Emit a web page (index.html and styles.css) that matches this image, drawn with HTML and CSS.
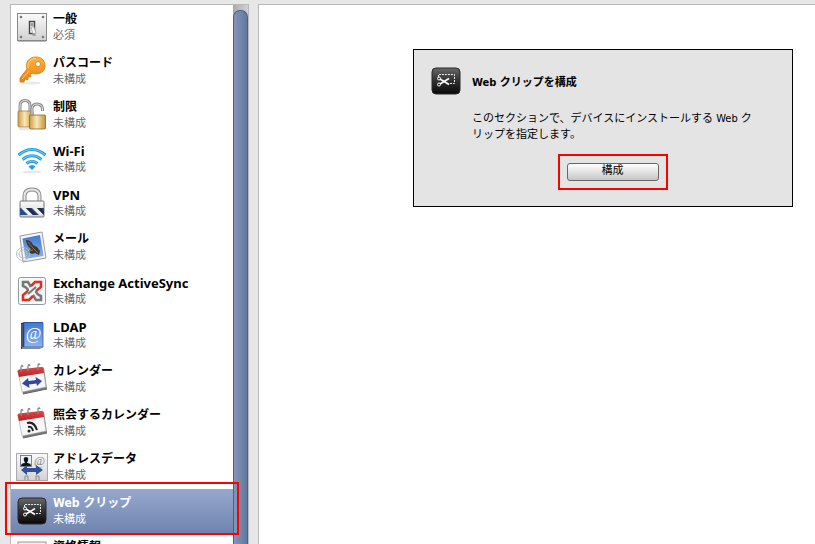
FILE: index.html
```html
<!DOCTYPE html>
<html lang="ja">

<head>
    <meta charset="UTF-8">
    <meta name="viewport" content="width=device-width, initial-scale=1.0">
    <title>Web クリップ</title>
    <link rel="stylesheet" href="styles.css">
</head>

<body>
    <svg class="defs" aria-hidden="true">
        <defs>
            <linearGradient id="plate" x2="0" y2="1">
                <stop offset="0" stop-color="#fafafa" />
                <stop offset="1" stop-color="#d2d2d2" />
            </linearGradient>
            <linearGradient id="orange" x2="0" y2="1">
                <stop offset="0" stop-color="#ffb13d" />
                <stop offset="1" stop-color="#ea8210" />
            </linearGradient>
            <linearGradient id="gold">
                <stop offset="0" stop-color="#c99b4c" />
                <stop offset=".45" stop-color="#fae9b4" />
                <stop offset="1" stop-color="#c49140" />
            </linearGradient>
            <linearGradient id="sky" x2="0" y2="1">
                <stop offset="0" stop-color="#3f79d2" />
                <stop offset="1" stop-color="#8bb4ee" />
            </linearGradient>
            <linearGradient id="red" x2="0" y2="1">
                <stop offset="0" stop-color="#e04848" />
                <stop offset="1" stop-color="#b72222" />
            </linearGradient>
            <linearGradient id="black" x2="0" y2="1">
                <stop offset="0" stop-color="#686868" />
                <stop offset=".5" stop-color="#303030" />
                <stop offset="1" stop-color="#080808" />
            </linearGradient>
            <symbol id="clip" viewBox="0 0 32 32">
                <rect x="2" y="3" width="28" height="26" rx="4" fill="url(#black)" stroke="#282828" />
                <path d="M8.500 12V9.500H24.500V18.500H20" fill="none" stroke="#e8e8e8" stroke-dasharray="2 1" />
                <path d="M10 14 19 19.500M10 19 19 13.500" stroke="#fff" stroke-width="1.500" />
                <circle cx="9" cy="13.500" r="1.500" fill="none" stroke="#fff" />
                <circle cx="9" cy="19.500" r="1.500" fill="none" stroke="#fff" />
            </symbol>
            <symbol id="calendar" viewBox="0 0 32 32">
                <path d="M2 9 28 5 31 26 7 31Z" fill="#777" />
                <path d="M2 8 27 4 30 24 6 29Z" fill="#f6f6f6" stroke="#aaa" stroke-width=".6" />
                <path d="M1.500 8Q1.500 7 3 6.500L25 4Q27 4 27.500 5L28 10 3 14Z" fill="url(#red)" />
                <path d="M5 9V4Q6 1 7 4M12 8V3Q13 0 14 3M22 7V2Q23 0 24 2" fill="none" stroke="#888" stroke-width="1.300" />
                <path d="M7 31 31 26" stroke="#666" />
            </symbol>
        </defs>
    </svg>

    <div class="page">
        <nav class="sidebar">
            <ul class="payloads">
                <li><a href="#" class="payload">
                    <svg class="icon" viewBox="0 0 32 32">
                        <rect x="1.500" y="2.500" width="29" height="27" fill="url(#plate)" stroke="#888" />
                        <path d="M2 30.500H30" stroke="#bbb" />
                        <g fill="#777"><circle cx="5" cy="6" r="1.300" /><circle cx="27" cy="6" r="1.300" /><circle cx="5" cy="26" r="1.300" /><circle cx="27" cy="26" r="1.300" /></g>
                        <path d="M15 22H19L20 25H17Z" fill="#aaa" />
                        <rect x="13.500" y="10.500" width="5" height="12" fill="#f4f4f4" stroke="#444" stroke-width="1.400" />
                        <path d="M14.500 12H17.500V15H14.500Z" fill="#999" /><path d="M15 16H18L20 22 17 23Z" fill="#f4f4f4" stroke="#999" stroke-width=".7" />
                    </svg>
                    <span class="label"><strong>一般</strong><small>必須</small></span>
                </a></li>
                <li><a href="#" class="payload">
                    <svg class="icon" viewBox="0 0 32 32">
                        <ellipse cx="15" cy="28" rx="10" ry="1.500" fill="#e8e8e8" />
                        <path fill-rule="evenodd" d="M11 14C9 7 13 2 20 2 26 2 29 6 29 11S25 19 19 19L16 18 14 20 15 22 12 22 12 25 9 24 8 27 4 27 4 23ZM22 6.500A2.500 2.500 0 1 0 22 11.500 2.500 2.500 0 1 0 22 6.500Z" fill="url(#orange)" stroke="#d47a12" stroke-width=".8" />
                        <path d="M12 13C11 7 15 3.500 20 3.500" fill="none" stroke="#ffd48c" />
                        <path d="M13 16 6 24" stroke="#ffc66d" />
                    </svg>
                    <span class="label"><strong>パスコード</strong><small>未構成</small></span>
                </a></li>
                <li><a href="#" class="payload">
                    <svg class="icon" viewBox="0 0 32 32">
                        <path d="M4 13V7Q4 1.500 9 1.500T14 7V13" fill="none" stroke="#888" stroke-width="3" />
                        <path d="M4 13V7Q4 1.500 9 1.500T14 7V13" fill="none" stroke="#e4e4e4" />
                        <rect x="2" y="12" width="15" height="16" rx="1" fill="url(#gold)" stroke="#9b7434" stroke-width=".7" />
                        <path d="M16 16V10Q16 5 21 5T26.500 10V12" fill="none" stroke="#888" stroke-width="3" />
                        <path d="M16 16V10Q16 5 21 5T26.500 10V12" fill="none" stroke="#e4e4e4" />
                        <rect x="13.500" y="16" width="16" height="14" rx="1" fill="url(#gold)" stroke="#8b652c" stroke-width=".8" />
                        <path d="M3 30H13" stroke="#ccc" />
                    </svg>
                    <span class="label"><strong>制限</strong><small>未構成</small></span>
                </a></li>
                <li><a href="#" class="payload">
                    <svg class="icon" viewBox="0 0 32 32">
                        <ellipse cx="16" cy="29" rx="10" ry="1.500" fill="#e8e8e8" />
                        <g fill="none" stroke="#249ce2" stroke-width="3"><path d="M2.500 12Q16 1 29.500 12M6.500 16.500Q16 9 25.500 16.500M10.500 20.500Q16 16 21.500 20.500" /></g>
                        <g fill="none" stroke="#75cdfa"><path d="M3 11.500Q16 1 29 11.500M7 16Q16 9 25 16M11 20Q16 16 21 20" /></g>
                        <path d="M12.500 23.500Q16 20.500 19.500 23.500L16 27Z" fill="#249ce2" />
                    </svg>
                    <span class="label"><strong class="latin">Wi-Fi</strong><small>未構成</small></span>
                </a></li>
                <li><a href="#" class="payload">
                    <svg class="icon" viewBox="0 0 32 32">
                        <path d="M8.500 15V9Q8.500 2.500 16 2.500T23.500 9V15" fill="none" stroke="#888" stroke-width="4" />
                        <path d="M8.500 15V9Q8.500 2.500 16 2.500T23.500 9V15" fill="none" stroke="#e8e8e8" stroke-width="2" />
                        <rect x="4" y="14" width="24" height="16" rx="1" fill="url(#plate)" stroke="#777" />
                        <path d="M4 21H28V28H4Z" fill="#274a91" />
                        <path d="M5 21H10L17 28H12ZM16 21H21L28 28H23Z" fill="#eee" /><path d="M10 21H14L21 28H17ZM21 21H25L28 24V28Z" fill="#222b42" />
                    </svg>
                    <span class="label"><strong class="latin">VPN</strong><small>未構成</small></span>
                </a></li>
                <li><a href="#" class="payload">
                    <svg class="icon" viewBox="0 0 32 32">
                        <path d="M4 5 26 1 30 27 7 31Z" fill="#f7f7f7" stroke="#999" />
                        <path d="M6.500 7.500 24 4 27.500 25 9.500 28Z" fill="url(#sky)" />
                        <path d="M10 9Q15 9 17 14L21 16 24 20 23 24 19 22 16 23 12 21 15 18Q10 14 10 9Z" fill="#403629" />
                        <path d="M12 11 17 17 22 22M13 20 17 19" stroke="#8f754e" />
                        <g fill="none" stroke="#b4bcc5" stroke-width=".9"><circle cx="7" cy="23" r="6.500" /><circle cx="7" cy="23" r="4" /></g>
                    </svg>
                    <span class="label"><strong>メール</strong><small>未構成</small></span>
                </a></li>
                <li><a href="#" class="payload">
                    <svg class="icon" viewBox="0 0 32 32">
                        <rect x="2.500" y="2.500" width="27" height="27" rx="2" fill="#f1f3f4" stroke="#8d9ca3" />
                        <rect x="4" y="4" width="24" height="24" rx="1" fill="none" stroke="#fff" />
                        <g fill="none" stroke-width="2.500">
                            <path d="M15 12 12 7H7V11Q12 13 12 16" stroke="#777" />
                            <path d="M15 11 19 7H25V12L20 16" stroke="#dc3025" />
                            <path d="M17 20 20 25H25V21Q20 19 20 16" stroke="#777" />
                            <path d="M17 21 13 25H7V20L12 16" stroke="#dc3025" />
                            <path d="M12 19 20 12" stroke="#777" stroke-width="2" />
                        </g>
                    </svg>
                    <span class="label"><strong class="latin">Exchange ActiveSync</strong><small>未構成</small></span>
                </a></li>
                <li><a href="#" class="payload">
                    <svg class="icon" viewBox="0 0 32 32">
                        <path d="M5 4 9 3H27V28L24 30H5Z" fill="#26354c" />
                        <path d="M8 3.500H27V28H8Z" fill="url(#sky)" stroke="#2b5ba7" stroke-width=".8" />
                        <path d="M6 5V28" stroke="#66758b" />
                        <path d="M6 29H26" stroke="#ddd" />
                        <text class="at" x="17.500" y="20" text-anchor="middle" fill="#fff">@</text>
                    </svg>
                    <span class="label"><strong class="latin">LDAP</strong><small>未構成</small></span>
                </a></li>
                <li><a href="#" class="payload">
                    <svg class="icon" viewBox="0 0 32 32">
                        <use href="#calendar" />
                        <path d="M6 20.500 12 15 12.500 18 20 17 19.500 14 26 18 21 23 20.500 20.500 13 21.500 13.500 25Z" fill="#30479b" />
                    </svg>
                    <span class="label"><strong>カレンダー</strong><small>未構成</small></span>
                </a></li>
                <li><a href="#" class="payload">
                    <svg class="icon" viewBox="0 0 32 32">
                        <use href="#calendar" />
                        <g fill="none" stroke="#222" stroke-width="2"><path d="M11 16Q18 14 21 23M12 20Q16 19 17 24" /></g>
                        <circle cx="13" cy="24" r="1.500" fill="#222" />
                    </svg>
                    <span class="label"><strong>照会するカレンダー</strong><small>未構成</small></span>
                </a></li>
                <li><a href="#" class="payload">
                    <svg class="icon" viewBox="0 0 32 32">
                        <rect x=".500" y="2.500" width="31" height="27" fill="url(#plate)" stroke="#aaa" />
                        <rect x="4.500" y="4.500" width="11" height="11" fill="#e9f2fc" stroke="#667" stroke-width=".8" />
                        <path d="M5 15Q5 12 9 12 6 6 10 6T11 12Q15 12 15 15Z" fill="#111" />
                        <text class="at small" x="23.500" y="14" text-anchor="middle" fill="#888">@</text>
                        <path d="M5 19 11 14V17H20V14L27 19 20 24V21H11V24Z" fill="#334f99" />
                        <path d="M9 29V25H12V29M20 29V25H23V29" fill="none" stroke="#888" />
                    </svg>
                    <span class="label"><strong>アドレスデータ</strong><small>未構成</small></span>
                </a></li>
                <li><a href="#" class="payload selected" aria-current="page">
                    <svg class="icon" viewBox="0 0 32 32"><use href="#clip" /></svg>
                    <span class="label"><strong>Web クリップ</strong><small>未構成</small></span>
                </a></li>
                <li><a href="#" class="payload">
                    <svg class="icon" viewBox="0 0 32 32">
                        <rect x="2" y="3" width="28" height="26" fill="#f4f0dc" stroke="#999" />
                        <rect x="5" y="6" width="22" height="20" fill="#fff" stroke="#c8bf92" />
                    </svg>
                    <span class="label"><strong>資格情報</strong></span>
                </a></li>
            </ul>
            <div class="scrollbar"><div class="thumb"></div></div>
        </nav>

        <main class="content">
            <section class="card">
                <svg class="card-icon" viewBox="0 0 32 32"><use href="#clip" /></svg>
                <div class="card-body">
                    <h2>Web クリップを構成</h2>
                    <p>このセクションで、デバイスにインストールする Web クリップを指定します。</p>
                    <div class="action">
                        <button type="button">構成</button>
                    </div>
                </div>
            </section>
        </main>
    </div>
</body>

</html>
```

FILE: styles.css
```css
* {
    box-sizing: border-box;
}

body {
    margin: 0;
    overflow: hidden;
    background-color: #e7e7e7;
    color: #000;
    font-family: "DejaVu Sans Condensed", "Noto Sans CJK JP", sans-serif;
    font-size: 11px;
}

.defs {
    position: absolute;
    width: 0;
    height: 0;
}

.page {
    display: flex;
    gap: 9px;
    height: 100vh;
    padding: 4px 0 0 10px;
}

.sidebar {
    display: flex;
    flex: 0 0 239px;
    border: 1px solid #b9b9b9;
    border-bottom: none;
    background-color: #fff;
}

.payloads {
    flex: 1;
    margin: 0;
    padding: 0;
    list-style: none;
}

.payload {
    display: flex;
    gap: 5px;
    height: 44px;
    padding: 6px 0 0 5px;
    color: #000;
    text-decoration: none;
}

.icon {
    flex: none;
    width: 32px;
    height: 32px;
}

.label {
    display: flex;
    flex-direction: column;
    gap: 1px;
    white-space: nowrap;
}

.label strong {
    font-size: 12px;
    line-height: 16px;
}

.label .latin {
    font-family: "Noto Sans", "Noto Sans CJK JP", sans-serif;
    font-size: 13px;
}

.label small {
    color: #666;
    font-size: 11px;
    line-height: 16px;
}

.at {
    font-family: "Liberation Serif", serif;
    font-size: 17px;
}

.at.small {
    font-size: 12px;
}

.selected {
    position: relative;
    background: linear-gradient(#97a8ce, #7084ae);
    color: #fff;
}

.selected .label small {
    color: #fff;
}

/* red frame around the selected row */
.selected::after {
    content: "";
    position: absolute;
    z-index: 1;
    inset: -7px -6px -2px -6px;
    border: 2px solid #f00;
}

.scrollbar {
    flex: 0 0 15px;
    padding-top: 5px;
    background: linear-gradient(90deg, #aaa, #d2d2d2);
}

.thumb {
    height: 100%;
    border: 1px solid #4c6084;
    border-bottom: none;
    border-radius: 7px 7px 0 0;
    background: linear-gradient(90deg, #8496b8, #62779e);
}

.content {
    flex: 1;
    padding: 44px 22px 0 154px;
    border: 1px solid #b9b9b9;
    border-width: 1px 0 0 1px;
    background-color: #fff;
}

.card {
    display: flex;
    gap: 10px;
    padding: 15px 39px 16px 16px;
    border: 1px solid #000;
    background-color: #e4e4e4;
}

.card-icon {
    flex: none;
    width: 32px;
    height: 32px;
}

.card-body {
    flex: 1;
}

.card h2 {
    margin: 10px 0 20px;
    font-size: 11px;
    line-height: 16px;
}

.card p {
    margin: 0 0 11px;
    line-height: 16px;
}

.action {
    width: fit-content;
    margin: 0 auto;
    padding: 7px;
    border: 2px solid #f00;
}

.action button {
    display: block;
    width: 92px;
    height: 18px;
    padding: 0 0 2px;
    border: 1px solid #666;
    border-radius: 3px;
    background: linear-gradient(#fff, #c6c6c6);
    color: #000;
    font: inherit;
    line-height: 14px;
}
```
